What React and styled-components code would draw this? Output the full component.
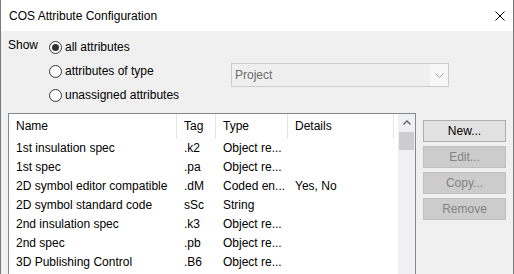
import React from "react";
import styled, { createGlobalStyle } from "styled-components";

const Global = createGlobalStyle`
  html, body { margin: 0; padding: 0; background: #ffffff; }
  body { font-family: "Liberation Sans", Arial, sans-serif; font-size: 12px; color: #000; }
  * { box-sizing: border-box; }
`;

const Window = styled.div`
  width: 514px;
  height: 274px;
  border-left: 1px solid #7a7a7a;
  border-right: 1px solid #7a7a7a;
  background: #f0f0f0;
  overflow: hidden;
  display: flex;
  flex-direction: column;
`;

const TitleBar = styled.div`
  height: 31px;
  flex: none;
  background: #ffffff;
  display: flex;
  align-items: center;
  justify-content: space-between;
  padding: 0 8px 0 8px;
`;

const Title = styled.span`
  font-size: 12px;
  line-height: 16px;
  margin-top: 1px;
`;

const CloseIcon = () => (
  <svg width="10" height="10" viewBox="0 0 10 10" style={{ display: "block" }}>
    <path d="M0.5 0.5 L9.5 9.5 M9.5 0.5 L0.5 9.5" stroke="#000" strokeWidth="1" fill="none" />
  </svg>
);

const Body = styled.div`
  flex: 1;
  padding: 4px 7px 0 7px;
  display: flex;
  flex-direction: column;
`;

const ShowSection = styled.div`
  display: grid;
  grid-template-columns: 41px 182px 218px;
  grid-template-rows: repeat(3, 24px);
`;

const ShowLabel = styled.div`
  grid-column: 1;
  grid-row: 1;
  line-height: 24px;
  margin-top: -2px;
`;

const RadioRow = styled.label`
  grid-column: 2;
  grid-row: ${(p) => p.$row};
  display: flex;
  align-items: center;
  gap: 3px;
  line-height: 24px;
  white-space: nowrap;
`;

const RadioCircle = styled.span`
  width: 13px;
  height: 13px;
  border: 1px solid #333333;
  border-radius: 50%;
  background: #ffffff;
  display: flex;
  align-items: center;
  justify-content: center;
  flex: none;
  &::after {
    content: "";
    width: 7px;
    height: 7px;
    border-radius: 50%;
    background: ${(p) => (p.$checked ? "#333333" : "transparent")};
  }
`;

const Combo = styled.div`
  grid-column: 3;
  grid-row: 2 / span 2;
  align-self: start;
  margin-top: 4px;
  height: 24px;
  border: 1px solid #cccccc;
  display: flex;
  background: #efefef;
`;

const ComboText = styled.div`
  flex: 1;
  padding-left: 3px;
  line-height: 22px;
  color: #6d6d6d;
`;

const ComboArrow = styled.div`
  width: 18px;
  background: #f7f7f7;
  display: flex;
  align-items: center;
  justify-content: center;
`;

const Main = styled.div`
  margin-top: 6px;
  display: flex;
  gap: 7px;
  align-items: flex-start;
`;

const ListBox = styled.div`
  width: 408px;
  height: 200px;
  border: 1px solid #828790;
  background: #ffffff;
  display: flex;
`;

const Table = styled.div`
  flex: 1;
  display: flex;
  flex-direction: column;
`;

const HeaderRow = styled.div`
  display: flex;
  height: 25px;
`;

const HeaderCell = styled.div`
  width: ${(p) => p.$w}px;
  flex: none;
  padding-left: 7px;
  border-right: 1px solid #e5e5e5;
  line-height: 24px;
  white-space: nowrap;
  overflow: hidden;
`;

const Row = styled.div`
  display: flex;
  height: 19px;
`;

const Cell = styled.div`
  width: ${(p) => p.$w}px;
  flex: none;
  padding-left: 7px;
  line-height: 19px;
  white-space: nowrap;
  overflow: hidden;
`;

const ScrollBar = styled.div`
  width: 17px;
  flex: none;
  background: #f0f0f0;
  display: flex;
  flex-direction: column;
  align-items: center;
`;

const ScrollButton = styled.div`
  height: 17px;
  width: 17px;
  display: flex;
  align-items: center;
  justify-content: center;
`;

const Thumb = styled.div`
  width: 15px;
  height: 18px;
  margin-top: 1px;
  background: #cdcdcd;
`;

const Buttons = styled.div`
  margin-top: 7px;
  width: 83px;
  display: flex;
  flex-direction: column;
  gap: 4px;
`;

const Button = styled.button`
  height: 22px;
  width: 83px;
  padding: 0;
  font: inherit;
  font-size: 12px;
  border: 1px solid ${(p) => (p.disabled ? "#bfbfbf" : "#adadad")};
  background: ${(p) => (p.disabled ? "#cccccc" : "#e1e1e1")};
  color: ${(p) => (p.disabled ? "#838383" : "#000000")};
`;

const cols = [168, 39, 72, 106];

const rows = [
  ["1st insulation spec", ".k2", "Object re...", ""],
  ["1st spec", ".pa", "Object re...", ""],
  ["2D symbol editor compatible", ".dM", "Coded en...", "Yes, No"],
  ["2D symbol standard code", "sSc", "String", ""],
  ["2nd insulation spec", ".k3", "Object re...", ""],
  ["2nd spec", ".pb", "Object re...", ""],
  ["3D Publishing Control", ".B6", "Object re...", ""],
];

export default function App() {
  return (
    <>
      <Global />
      <Window>
        <TitleBar>
          <Title>COS Attribute Configuration</Title>
          <CloseIcon />
        </TitleBar>
        <Body>
          <ShowSection>
            <ShowLabel>Show</ShowLabel>
            <RadioRow $row={1}>
              <RadioCircle $checked />
              all attributes
            </RadioRow>
            <RadioRow $row={2}>
              <RadioCircle />
              attributes of type
            </RadioRow>
            <RadioRow $row={3}>
              <RadioCircle />
              unassigned attributes
            </RadioRow>
            <Combo>
              <ComboText>Project</ComboText>
              <ComboArrow>
                <svg width="9" height="5" viewBox="0 0 9 5">
                  <path d="M0.5 0.5 L4.5 4.5 L8.5 0.5" stroke="#a0a0a0" strokeWidth="1" fill="none" />
                </svg>
              </ComboArrow>
            </Combo>
          </ShowSection>
          <Main>
            <ListBox>
              <Table>
                <HeaderRow>
                  <HeaderCell $w={cols[0]}>Name</HeaderCell>
                  <HeaderCell $w={cols[1]}>Tag</HeaderCell>
                  <HeaderCell $w={cols[2]}>Type</HeaderCell>
                  <HeaderCell $w={cols[3]}>Details</HeaderCell>
                </HeaderRow>
                {rows.map((r, i) => (
                  <Row key={i}>
                    {r.map((c, j) => (
                      <Cell key={j} $w={cols[j]}>{c}</Cell>
                    ))}
                  </Row>
                ))}
              </Table>
              <ScrollBar>
                <ScrollButton>
                  <svg width="8" height="5" viewBox="0 0 8 5">
                    <path d="M0.5 4.5 L4 1 L7.5 4.5" stroke="#606060" strokeWidth="1.3" fill="none" />
                  </svg>
                </ScrollButton>
                <Thumb />
              </ScrollBar>
            </ListBox>
            <Buttons>
              <Button>New...</Button>
              <Button disabled>Edit...</Button>
              <Button disabled>Copy...</Button>
              <Button disabled>Remove</Button>
            </Buttons>
          </Main>
        </Body>
      </Window>
    </>
  );
}
